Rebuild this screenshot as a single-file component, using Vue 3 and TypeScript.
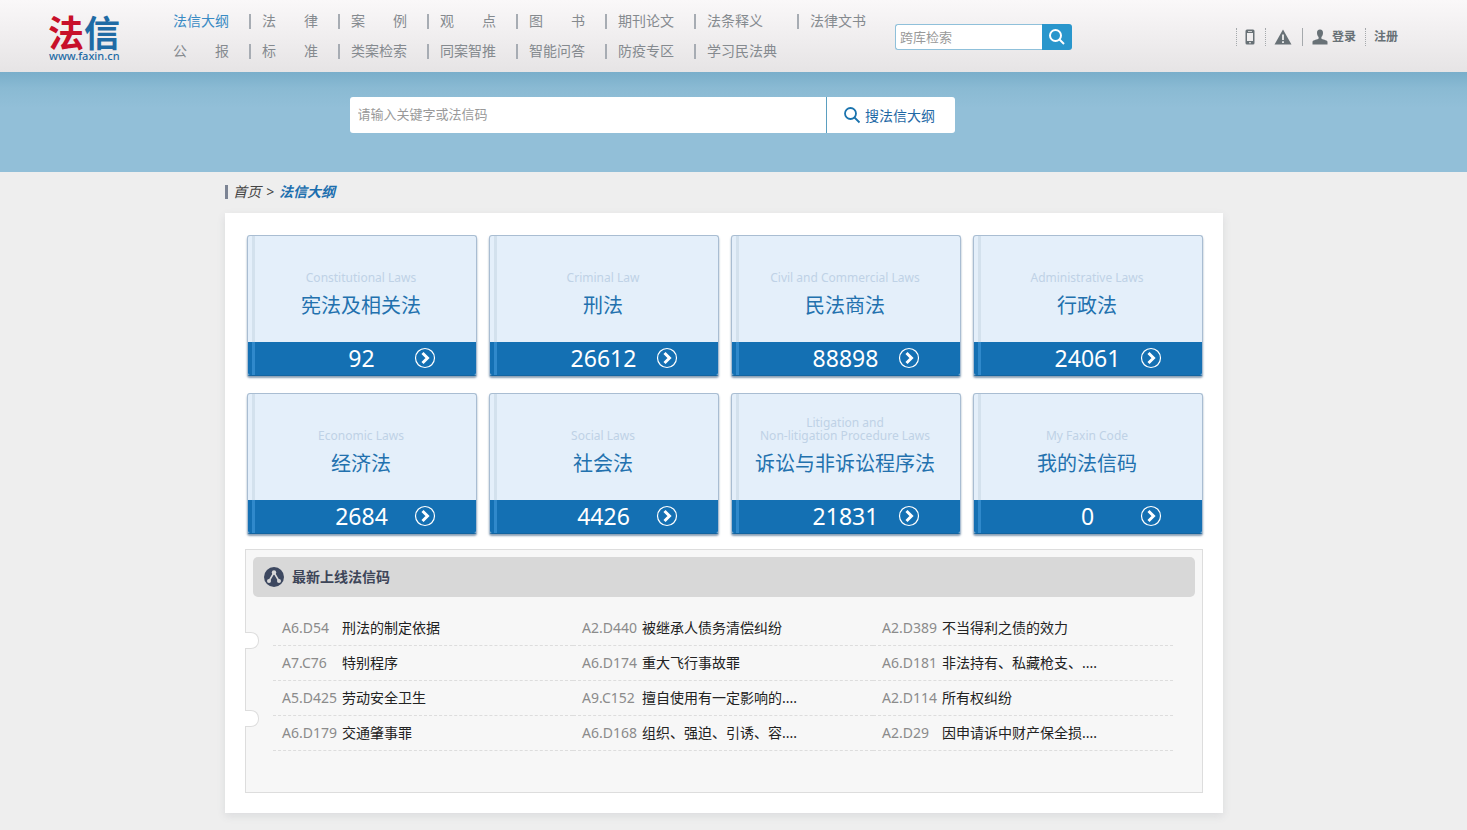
<script setup lang="ts">
import { ref } from 'vue'

interface LawCategory {
  english: string[]
  name: string
  count: number
}

interface CodeEntry {
  code: string
  title: string
}

const navItems: string[] = [
  '法信大纲', '法　　律', '案　　例', '观　　点', '图　　书', '期刊论文', '法条释义', '法律文书',
  '公　　报', '标　　准', '类案检索', '同案智推', '智能问答', '防疫专区', '学习民法典',
]

const categories: LawCategory[] = [
  { english: ['Constitutional Laws'], name: '宪法及相关法', count: 92 },
  { english: ['Criminal Law'], name: '刑法', count: 26612 },
  { english: ['Civil and Commercial Laws'], name: '民法商法', count: 88898 },
  { english: ['Administrative Laws'], name: '行政法', count: 24061 },
  { english: ['Economic Laws'], name: '经济法', count: 2684 },
  { english: ['Social Laws'], name: '社会法', count: 4426 },
  { english: ['Litigation and', 'Non-litigation Procedure Laws'], name: '诉讼与非诉讼程序法', count: 21831 },
  { english: ['My Faxin Code'], name: '我的法信码', count: 0 },
]

const entries: CodeEntry[] = [
  { code: 'A6.D54', title: '刑法的制定依据' },
  { code: 'A2.D440', title: '被继承人债务清偿纠纷' },
  { code: 'A2.D389', title: '不当得利之债的效力' },
  { code: 'A7.C76', title: '特别程序' },
  { code: 'A6.D174', title: '重大飞行事故罪' },
  { code: 'A6.D181', title: '非法持有、私藏枪支、....' },
  { code: 'A5.D425', title: '劳动安全卫生' },
  { code: 'A9.C152', title: '擅自使用有一定影响的....' },
  { code: 'A2.D114', title: '所有权纠纷' },
  { code: 'A6.D179', title: '交通肇事罪' },
  { code: 'A6.D168', title: '组织、强迫、引诱、容....' },
  { code: 'A2.D29', title: '因申请诉中财产保全损....' },
]

const crossQuery = ref('')
const outlineQuery = ref('')
</script>

<template>
  <div class="page">
    <header class="topbar">
      <a class="logo" href="#">
        <span class="logo-name"><span class="logo-red">法</span>信</span>
        <span class="logo-url">www.faxin.cn</span>
      </a>
      <nav class="nav">
        <ul class="nav-list">
          <li v-for="(item, i) in navItems" :key="item" class="nav-item">
            <a href="#" :class="['nav-link', { active: i === 0 }]">{{ item }}</a>
          </li>
        </ul>
      </nav>
      <form class="cross-search" @submit.prevent>
        <input v-model="crossQuery" class="cross-input" type="text" placeholder="跨库检索" aria-label="跨库检索" />
        <button class="cross-button" type="submit" aria-label="检索">
          <svg width="18" height="18" viewBox="0 0 18 18" fill="none" stroke="#fff" stroke-width="2">
            <circle cx="7.5" cy="7.5" r="5.5" />
            <path d="M11.5 11.5L16 16" />
          </svg>
        </button>
      </form>
      <div class="account">
        <a class="account-item phone" href="#" aria-label="手机版">
          <svg width="10" height="16" viewBox="0 0 10 16">
            <path fill-rule="evenodd" d="M2 .5h6a1.500 1.500 0 0 1 1.500 1.500v12a1.500 1.500 0 0 1-1.500 1.500H2A1.500 1.500 0 0 1 .5 14V2A1.500 1.500 0 0 1 2 .5zM2 4v8h6V4zM3 2v.8h4V2zM4 13.200v1h2v-1z" fill="#687176" />
          </svg>
        </a>
        <a class="account-item alert" href="#" aria-label="提示">
          <svg width="18" height="16" viewBox="0 0 18 16">
            <path d="M9 0.5L17.5 15.5H0.5z" fill="#687176" />
            <path d="M9 5.500V11M9 12.300V14" stroke="#fff" stroke-width="1.600" />
          </svg>
        </a>
        <a class="account-item login" href="#">
          <svg width="16" height="16" viewBox="0 0 16 16" fill="#687176">
            <path d="M8 .5C5.900.5 4.900 1.900 5 4c.1 1.700.6 3 1.600 3.900v1.700C5.800 10.700 1 11 .5 12.800V15.500h15v-2.700C15 11 10.200 10.700 9.400 9.600V7.900C10.400 7 10.900 5.700 11 4 11.100 1.900 10.100.5 8 .5z" />
          </svg>
          <span>登录</span>
        </a>
        <a class="account-item register" href="#">注册</a>
      </div>
    </header>

    <section class="banner">
      <form class="main-search" @submit.prevent>
        <input v-model="outlineQuery" class="main-input" type="text" placeholder="请输入关键字或法信码" aria-label="请输入关键字或法信码" />
        <button class="main-button" type="submit">
          <svg width="18" height="18" viewBox="0 0 18 18" fill="none" stroke="#1a73ae" stroke-width="1.800">
            <circle cx="7.500" cy="7.500" r="5.500" />
            <path d="M11.500 11.500L16.500 16.500" />
          </svg>
          <span>搜法信大纲</span>
        </button>
      </form>
    </section>

    <main class="content">
      <nav class="crumbs" aria-label="位置">
        <a href="#">首页</a>
        <span>&gt;</span>
        <a class="current" href="#">法信大纲</a>
      </nav>

      <div class="sheet">
        <div class="cards">
          <a v-for="c in categories" :key="c.name" class="card" href="#">
            <span class="card-cover">
              <span class="card-english">
                <span v-for="line in c.english" :key="line">{{ line }}</span>
              </span>
              <span class="card-name">{{ c.name }}</span>
            </span>
            <span class="card-foot">
              <span class="card-count">{{ c.count }}</span>
              <svg class="card-arrow" width="22" height="22" viewBox="0 0 22 22" fill="none" stroke="#fff">
                <circle cx="11" cy="11" r="9.500" stroke-width="1.200" />
                <path d="M8.500 6L13.500 11L8.500 16" stroke-width="3" />
              </svg>
            </span>
          </a>
        </div>

        <section class="latest">
          <span class="notch notch-upper"></span>
          <span class="notch notch-lower"></span>
          <h2 class="latest-title">
            <svg width="20" height="20" viewBox="0 0 20 20">
              <circle cx="10" cy="10" r="10" fill="#3d4860" />
              <path d="M5 14L10 5.500L15 14" fill="none" stroke="#d8d8d8" stroke-width="1.600" />
              <circle cx="10" cy="5.500" r="2.200" fill="#d8d8d8" />
              <circle cx="5" cy="14" r="2" fill="#d8d8d8" />
              <circle cx="15" cy="14" r="2" fill="#d8d8d8" />
            </svg>
            <span>最新上线法信码</span>
          </h2>
          <ul class="entries">
            <li v-for="e in entries" :key="e.code" class="entry">
              <span class="entry-code">{{ e.code }}</span>
              <a class="entry-title" href="#">{{ e.title }}</a>
            </li>
          </ul>
        </section>
      </div>
    </main>
  </div>
</template>

<style>
body {
  margin: 0;
  background: #eee;
}
</style>

<style scoped>
.page {
  min-height: 100vh;
  box-sizing: border-box;
  background: #eee;
  font-family: "Noto Sans", "Noto Sans CJK SC", sans-serif;
  font-size: 14px;
  line-height: 20px;
  color: #333;
}

.page *,
.page *::before,
.page *::after {
  box-sizing: border-box;
}

a {
  color: inherit;
  text-decoration: none;
}

ul {
  list-style: none;
  margin: 0;
  padding: 0;
}

svg {
  display: block;
  flex: none;
}

input,
button {
  font-family: inherit;
  margin: 0;
}

.topbar {
  display: flex;
  height: 72px;
  padding: 0 69px 0 48px;
  background: linear-gradient(#faf8f9, #e6e4e5);
}

.logo {
  display: flex;
  flex-direction: column;
  width: 125px;
  padding-top: 16px;
  color: #1f6ba5;
}

.logo-name {
  font-size: 36px;
  line-height: 35px;
  font-weight: 700;
}

.logo-red {
  color: #c8102a;
}

.logo-url {
  padding-left: 1px;
  font-size: 11px;
  line-height: 10px;
  font-weight: 500;
}

.nav {
  width: 722px;
  padding-top: 6px;
}

.nav-list {
  display: grid;
  grid-template-columns: repeat(6, 89px) 103px auto;
  grid-auto-rows: 30px;
}

.nav-item {
  display: flex;
  align-items: center;
  white-space: nowrap;
  color: #858a8f;
}

.nav-item::after {
  content: "";
  width: 2px;
  height: 15px;
  margin: 0 11px 0 auto;
  background: #a7acb3;
}

.nav-item:nth-child(8)::after,
.nav-item:last-child::after {
  display: none;
}

.nav-link.active {
  color: #3a8bc4;
}

.cross-search {
  display: flex;
  align-self: flex-start;
  width: 177px;
  height: 26px;
  margin-top: 24px;
}

.cross-input {
  flex: 1;
  min-width: 0;
  padding: 0 4px;
  border: 1px solid #8fc0da;
  border-right: 0;
  border-radius: 3px 0 0 3px;
  outline: none;
  background: #fff;
  font-size: 13px;
}

.cross-input::placeholder,
.main-input::placeholder {
  color: #999;
}

.cross-button {
  display: flex;
  align-items: center;
  justify-content: center;
  width: 30px;
  padding: 0;
  border: 0;
  border-radius: 0 3px 3px 0;
  background: #2996cc;
}

.account {
  display: flex;
  align-self: flex-start;
  height: 18px;
  margin: 28px 0 0 auto;
  font-size: 12px;
  font-weight: 700;
  line-height: 18px;
  color: #687176;
}

.account-item {
  display: flex;
  align-items: center;
  gap: 4px;
  border-left: 1px dotted #a5a9ac;
}

.phone {
  padding: 0 10px 0 8px;
}

.alert {
  padding: 0 10px 0 8px;
}

.login {
  padding: 0 9px;
  border-left-style: solid;
}

.register {
  padding-left: 8px;
}

.banner {
  height: 100px;
  padding: 25px 163px 0 0;
  background: linear-gradient(#79aeca, #8abad3 16px, #92bfd8 36px, #92bfd8);
}

.main-search {
  display: flex;
  width: 605px;
  height: 36px;
  margin: 0 auto;
  border-radius: 3px;
  background: #fff;
  overflow: hidden;
}

.main-input {
  flex: 1;
  min-width: 0;
  padding: 0 8px 2px;
  border: 0;
  outline: none;
  background: transparent;
  font-size: 13px;
}

.main-button {
  display: flex;
  align-items: center;
  justify-content: center;
  gap: 4px;
  width: 129px;
  padding: 0 3px 0 0;
  border: 0;
  border-left: 1px solid #5b9fc0;
  background: transparent;
  font-size: 14px;
  color: #1f68a5;
}

.content {
  width: 998px;
  margin-left: calc((100% - 1017px) / 2);
  padding-bottom: 17px;
}

.crumbs {
  display: flex;
  align-items: center;
  gap: 5px;
  height: 41px;
  padding-bottom: 2px;
  font-style: italic;
  color: #444;
}

.crumbs::before {
  content: "";
  width: 3px;
  height: 14px;
  background: #7c8494;
}

.crumbs .current {
  font-weight: 700;
  color: #1c6fae;
}

.sheet {
  padding: 22px 20px 20px;
  background: #fff;
  box-shadow: 0 3px 8px rgba(80, 90, 110, 0.12);
}

.cards {
  display: grid;
  grid-template-columns: repeat(4, 1fr);
  gap: 16px 12px;
  margin-left: 2px;
}

.card {
  position: relative;
  display: flex;
  flex-direction: column;
  border: 1px solid #a9bdd2;
  border-bottom-color: #1264a0;
  border-radius: 3px;
  background: #e4effa;
  box-shadow: 0 2px 2px rgba(60, 95, 130, 0.6);
  margin-bottom: 1px;
  text-align: center;
  overflow: hidden;
}

.card::before {
  content: "";
  position: absolute;
  top: 0;
  bottom: 0;
  left: 4px;
  width: 3px;
  background: #d3e1ed;
}

.card-cover {
  display: flex;
  flex-direction: column;
  justify-content: flex-end;
  height: 106px;
  padding: 0 2px 21px 0;
}

.card-english {
  display: flex;
  flex-direction: column;
  font-size: 12px;
  line-height: 13px;
  color: #bfd2e6;
}

.card-name {
  margin-top: 7px;
  font-size: 20px;
  line-height: 30px;
  color: #2271ae;
}

.card-foot {
  position: relative;
  height: 33px;
  padding-right: 1px;
  background: #1470b3;
  color: #fff;
}

.card-foot::before {
  content: "";
  position: absolute;
  top: 0;
  bottom: 0;
  left: 4px;
  width: 3px;
  background: #3089cb;
}

.card-count {
  display: block;
  font-size: 23px;
  line-height: 33px;
}

.card-arrow {
  position: absolute;
  top: 5px;
  right: 40px;
}

.latest {
  position: relative;
  margin-top: 14px;
  padding: 7px 7px 41px;
  border: 1px solid #ddd;
  background: #f7f7f7;
}

.notch {
  position: absolute;
  left: -1px;
  width: 14px;
  height: 17px;
  border: 1px solid #ddd;
  border-left: 0;
  border-radius: 0 8px 8px 0;
  background: #fff;
}

.notch-upper {
  top: 82px;
}

.notch-lower {
  top: 160px;
}

.latest-title {
  display: flex;
  align-items: center;
  gap: 8px;
  height: 40px;
  margin: 0;
  padding-left: 11px;
  border-radius: 5px;
  background: #d8d8d8;
  font-size: 14px;
  font-weight: 700;
  color: #3d4558;
}

.entries {
  display: grid;
  grid-template-columns: repeat(3, 1fr);
  margin: 14px 22px 0 20px;
}

.entry {
  display: flex;
  align-items: center;
  height: 35px;
  padding-left: 9px;
  border-bottom: 1px dashed #ddd;
  white-space: nowrap;
}

.entry-code {
  width: 60px;
  font-size: 14px;
  color: #8b8b8b;
}

.entry-title {
  color: #222;
}
</style>
